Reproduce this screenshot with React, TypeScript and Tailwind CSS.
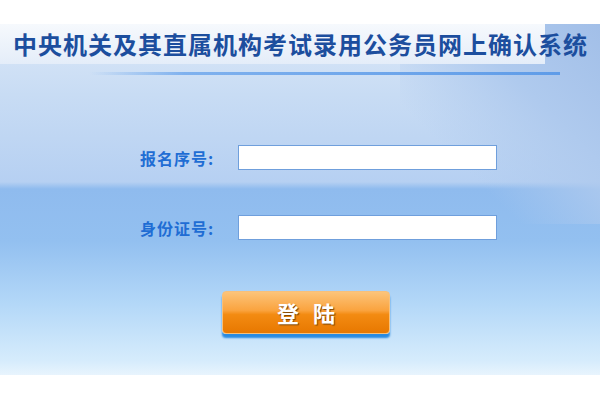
export default function App() {
  const font = { fontFamily: '"Noto Sans CJK SC", "Noto Sans", sans-serif' };
  return (
    <div className="w-[600px] h-[400px] bg-white overflow-hidden" style={font}>
      <div className="h-[24px]" />
      <div className="relative h-[351px] overflow-hidden bg-[linear-gradient(180deg,#dbe8f8_0%,#c8dcf4_20%,#b6d0f2_45%,#8fbbee_47%,#93c0f0_62%,#b4d8f8_80%,#d6ecfc_96%,#e8f4fd_100%)]">
        {/* right darker shading */}
        <div className="absolute right-0 top-0 h-[200px] w-[200px] bg-[linear-gradient(225deg,#a2bfe8_0%,#afcaee_35%,rgba(180,208,242,0)_70%)]" />
        {/* title banner */}
        <div className="relative flex h-[40px] w-[545px] items-center bg-[linear-gradient(180deg,#f6f9fd_0%,#e4edf9_100%)] pl-[13px]">
          <h1 className="text-[24px] font-bold leading-none tracking-[1px] text-[#1c4e9e] whitespace-nowrap">
            中央机关及其直属机构考试录用公务员网上确认系统
          </h1>
        </div>
        {/* underline */}
        <div className="relative ml-[90px] mt-[8px] h-[3px] w-[470px] bg-[linear-gradient(90deg,rgba(110,165,235,0)_0%,#7fb1ee_20%,#5f9ce8_100%)]" />

        <div className="relative mt-[70px] flex flex-col">
          <div className="flex h-[25px] items-center">
            <span className="ml-[140px] w-[98px] text-[16px] font-bold tracking-[1px] text-[#1f6dd4]">报名序号:</span>
            <input className="h-[25px] w-[259px] border border-[#6f9fdc] bg-white outline-none" />
          </div>
          <div className="mt-[45px] flex h-[25px] items-center">
            <span className="ml-[140px] w-[98px] text-[16px] font-bold tracking-[1px] text-[#1f6dd4]">身份证号:</span>
            <input className="h-[25px] w-[259px] border border-[#6f9fdc] bg-white outline-none" />
          </div>
          <div className="mt-[51px] ml-[222px]">
            <button className="flex h-[43px] w-[168px] items-center justify-center rounded-[4px] border border-[#f7c07a] bg-[linear-gradient(180deg,#fcc47a_0%,#faa33e_45%,#f38b12_55%,#e87800_100%)] shadow-[0_4px_2px_#2a8be0] text-[22px] font-bold text-white [text-shadow:1px_1px_1px_#7a4200] tracking-[14px] pl-[14px]">
              登陆
            </button>
          </div>
        </div>
      </div>
    </div>
  );
}
